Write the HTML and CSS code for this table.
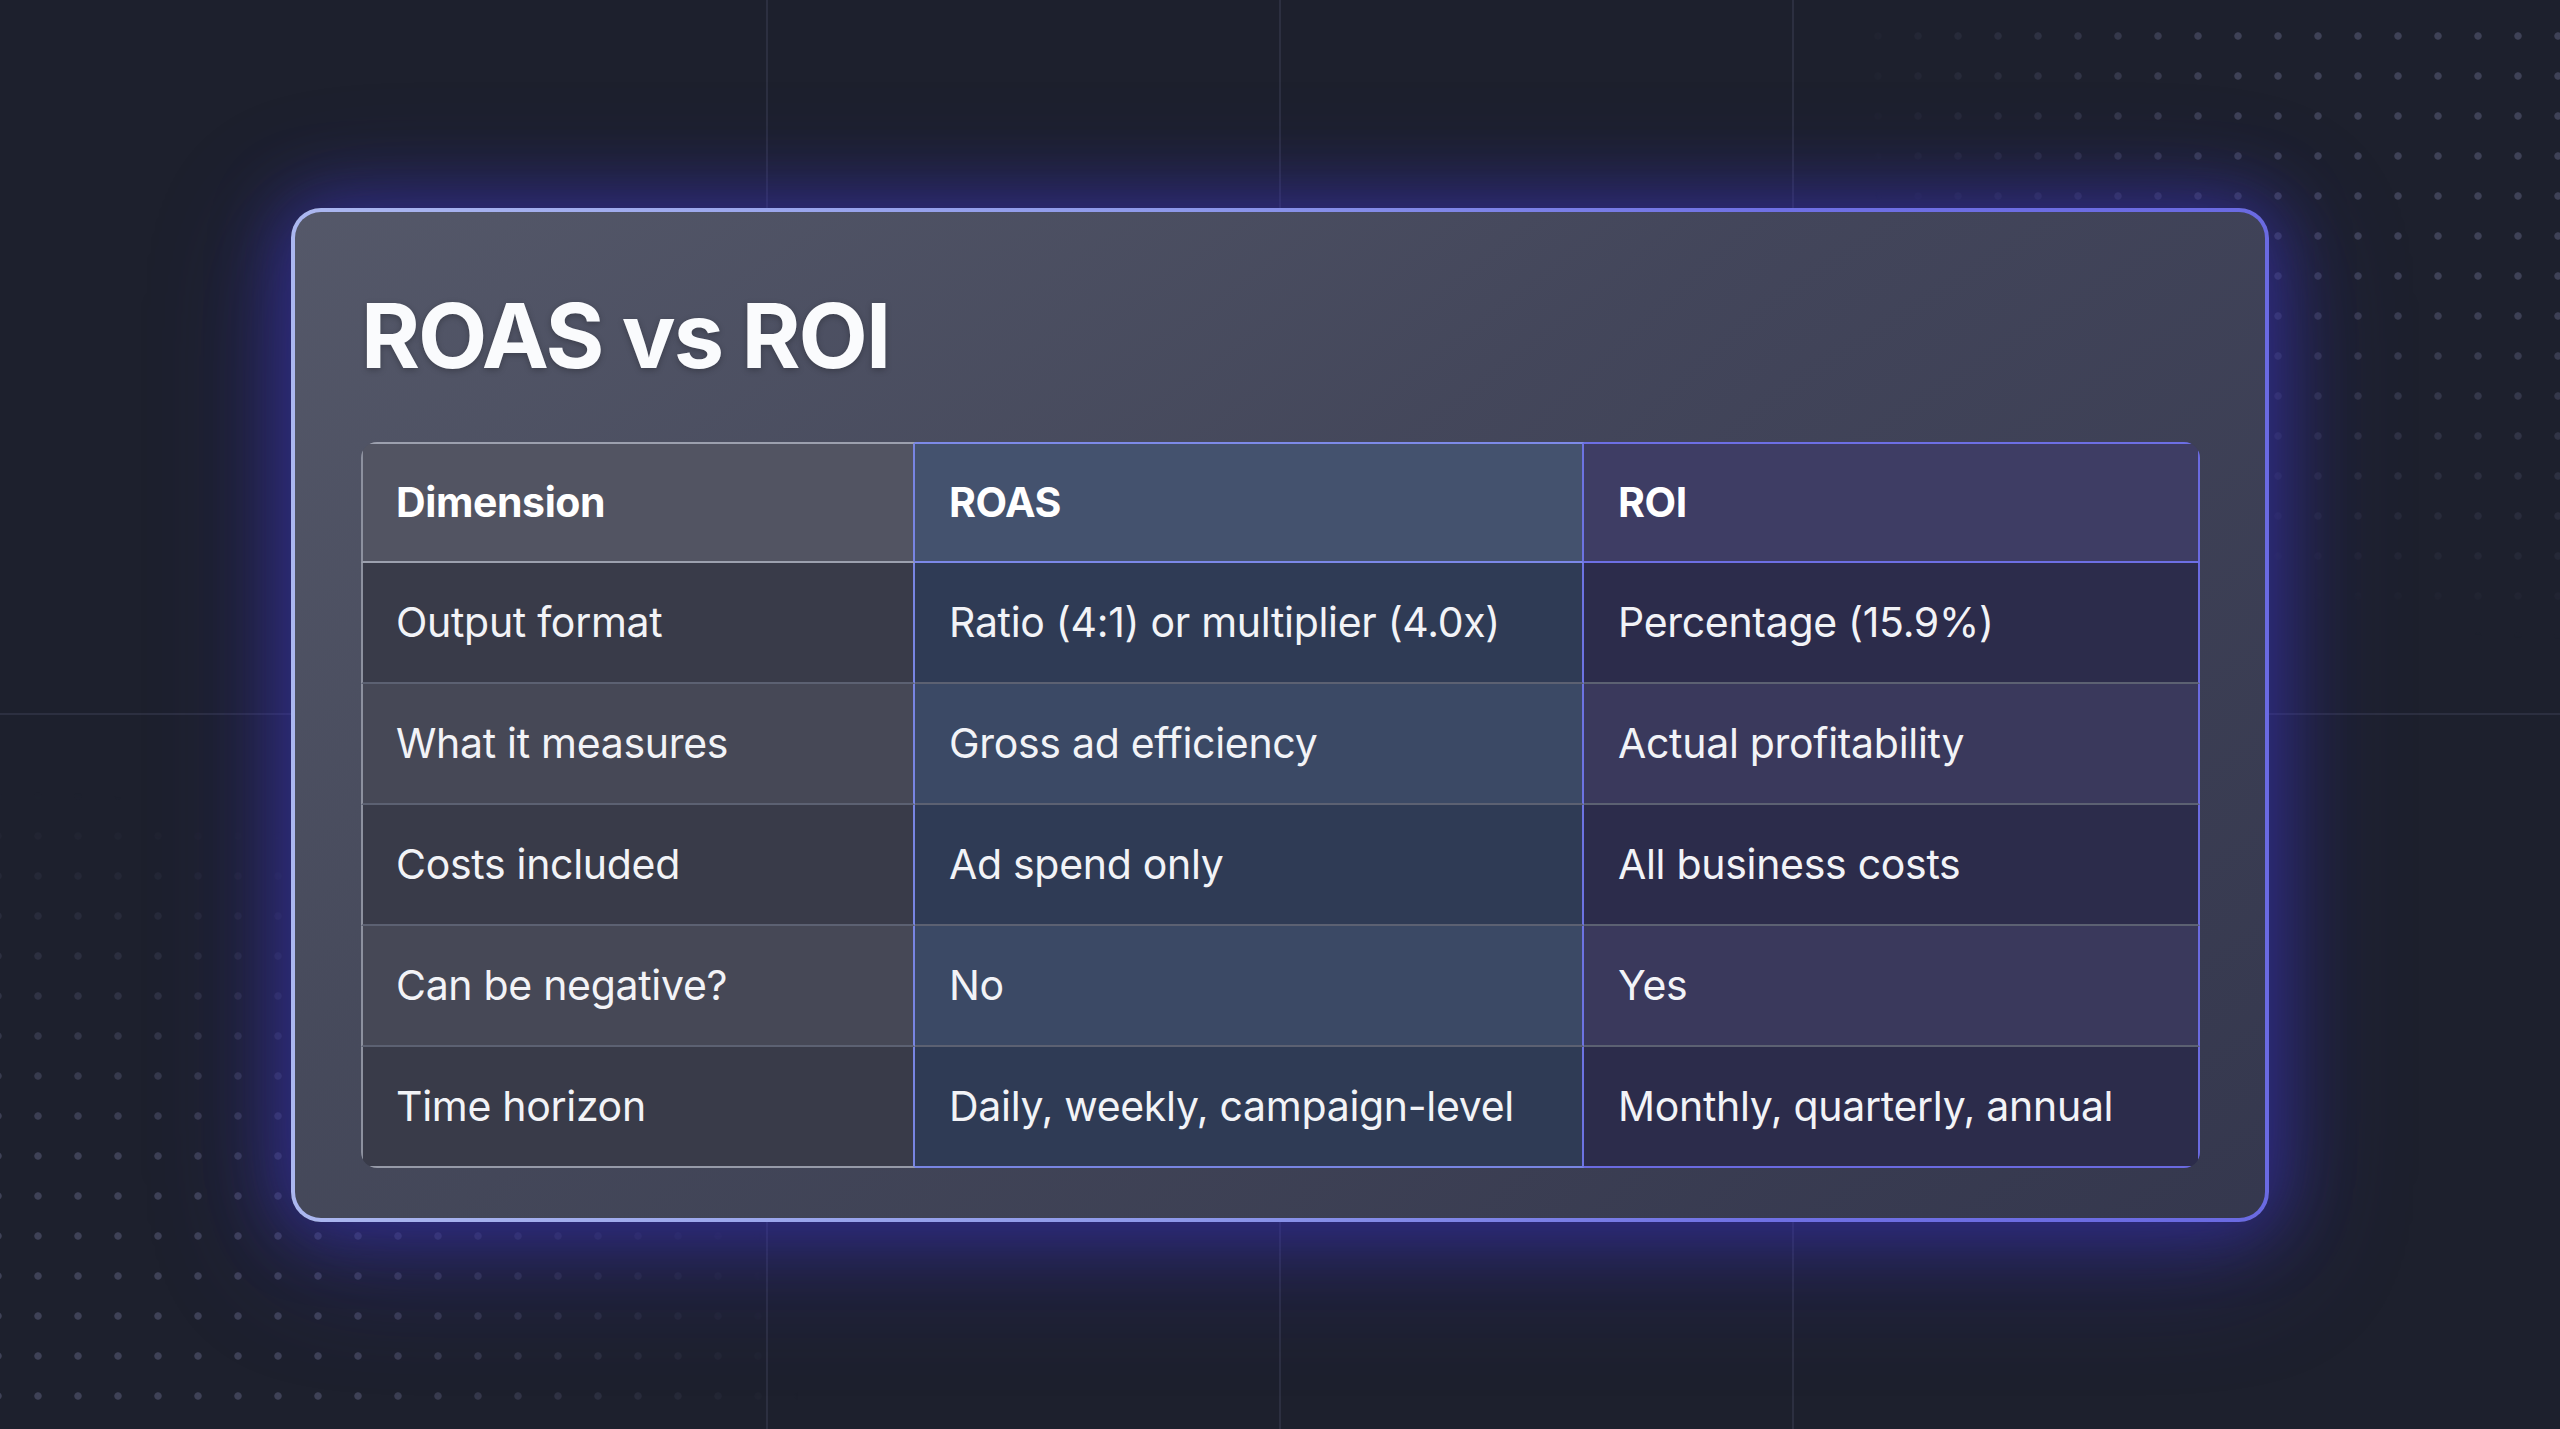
FILE: index.html
```html
<!DOCTYPE html>
<html lang="en">
<head>
<meta charset="utf-8">
<title>ROAS vs ROI</title>
<link rel="stylesheet" href="styles.css">
</head>
<body>
<div class="scene">
  <div class="grid-lines"></div>
  <div class="dots"></div>
  <section class="card">
    <h1 class="title">ROAS vs ROI</h1>
    <div class="table">
      <div class="cell c1 head">Dimension</div>
      <div class="cell c2 head">ROAS</div>
      <div class="cell c3 head">ROI</div>

      <div class="cell c1">Output format</div>
      <div class="cell c2">Ratio (4:1) or multiplier (4.0x)</div>
      <div class="cell c3">Percentage (15.9%)</div>

      <div class="cell c1 alt">What it measures</div>
      <div class="cell c2 alt">Gross ad efficiency</div>
      <div class="cell c3 alt">Actual profitability</div>

      <div class="cell c1">Costs included</div>
      <div class="cell c2">Ad spend only</div>
      <div class="cell c3">All business costs</div>

      <div class="cell c1 alt">Can be negative?</div>
      <div class="cell c2 alt">No</div>
      <div class="cell c3 alt">Yes</div>

      <div class="cell c1 last">Time horizon</div>
      <div class="cell c2 last">Daily, weekly, campaign-level</div>
      <div class="cell c3 last">Monthly, quarterly, annual</div>
    </div>
  </section>
</div>
</body>
</html>
```

FILE: styles.css
```css
html, body {
  margin: 0;
  padding: 0;
  background: #1d202d;
}

body {
  font-family: "Inter", "Noto Sans", "Liberation Sans", sans-serif;
  color: #f3f4f8;
}

.scene {
  position: relative;
  width: 2560px;
  height: 1429px;
  overflow: hidden;
  display: flex;
  align-items: center;
  justify-content: center;
  background: #1d202d;
}

.grid-lines {
  position: absolute;
  inset: 0;
  background:
    linear-gradient(#2c2f40, #2c2f40) 766px 0 / 2px 100% no-repeat,
    linear-gradient(#2c2f40, #2c2f40) 1279px 0 / 2px 100% no-repeat,
    linear-gradient(#2c2f40, #2c2f40) 1792px 0 / 2px 100% no-repeat,
    linear-gradient(#2c2f40, #2c2f40) 0 713px / 100% 2px no-repeat;
}

.dots {
  position: absolute;
  inset: 0;
  background-image: radial-gradient(circle, #3e4156 3.3px, rgba(62, 65, 86, 0) 4.1px);
  background-size: 40px 40px;
  background-position: 18px 16px;
  -webkit-mask-image:
    radial-gradient(ellipse 720px 640px at 100% 0%, #000 48%, transparent 100%),
    radial-gradient(ellipse 800px 640px at 0% 100%, #000 45%, transparent 100%);
  mask-image:
    radial-gradient(ellipse 720px 640px at 100% 0%, #000 48%, transparent 100%),
    radial-gradient(ellipse 800px 640px at 0% 100%, #000 45%, transparent 100%);
}

.card {
  position: relative;
  z-index: 1;
  box-sizing: border-box;
  width: 1978px;
  height: 1014px;
  padding: 79px 65px 50px 66px;
  border: 4px solid transparent;
  border-radius: 30px;
  background:
    linear-gradient(150deg, rgba(80, 83, 98, 0.95) 0%, rgba(64, 67, 82, 0.94) 40%, rgba(50, 53, 70, 0.95) 100%) padding-box,
    linear-gradient(90deg, #abb7f0 0%, #8d98ea 45%, #6f70e4 75%, #6a6ae2 100%) border-box;
  box-shadow:
    0 0 70px 10px rgba(64, 56, 210, 0.48),
    0 24px 130px 14px rgba(58, 50, 195, 0.32);
}

.title {
  margin: 0;
  font-size: 90px;
  line-height: 1;
  font-weight: 700;
  letter-spacing: -2px;
  color: #fafbfd;
  text-shadow: 0 2px 6px rgba(0, 0, 0, 0.25);
}

.table {
  margin-top: 61px;
  display: grid;
  grid-template-columns: 554px 669px 616px;
  border-radius: 16px;
  overflow: hidden;
}

.cell {
  box-sizing: border-box;
  height: 121px;
  display: flex;
  align-items: center;
  padding-left: 34px;
  font-size: 41px;
  font-weight: 400;
  letter-spacing: -0.3px;
  white-space: nowrap;
  border-bottom: 2px solid #5c6172;
  color: #f2f3f7;
}

.c1 {
  padding-left: 33px;
  border-left: 2px solid #8d919f;
  border-right: 2px solid #7885e2;
  background: #393b49;
}

.c2 {
  border-right: 2px solid #6d73e2;
  background: #2f3b55;
}

.c3 {
  border-right: 2px solid #6a6ae0;
  background: #2c2c4b;
}

.c1.alt { background: #464856; }
.c2.alt { background: #3b4965; }
.c3.alt { background: #3a395c; }

.head {
  font-weight: 700;
  letter-spacing: -0.4px;
  color: #ffffff;
  border-top: 2px solid #9ca0ae;
}

.c1.head {
  background: #525462;
  border-bottom-color: #9ca0ae;
}

.c2.head {
  background: #44526e;
  border-top-color: #7d8ae8;
  border-bottom-color: #7b88e8;
}

.c3.head {
  background: #3e3d64;
  border-top-color: #6d6fe4;
  border-bottom-color: #6d6fe4;
}

.last.c1 { border-bottom-color: #969aa8; }
.last.c2 { border-bottom-color: #7885e2; }
.last.c3 { border-bottom-color: #6a6ae0; }
```
